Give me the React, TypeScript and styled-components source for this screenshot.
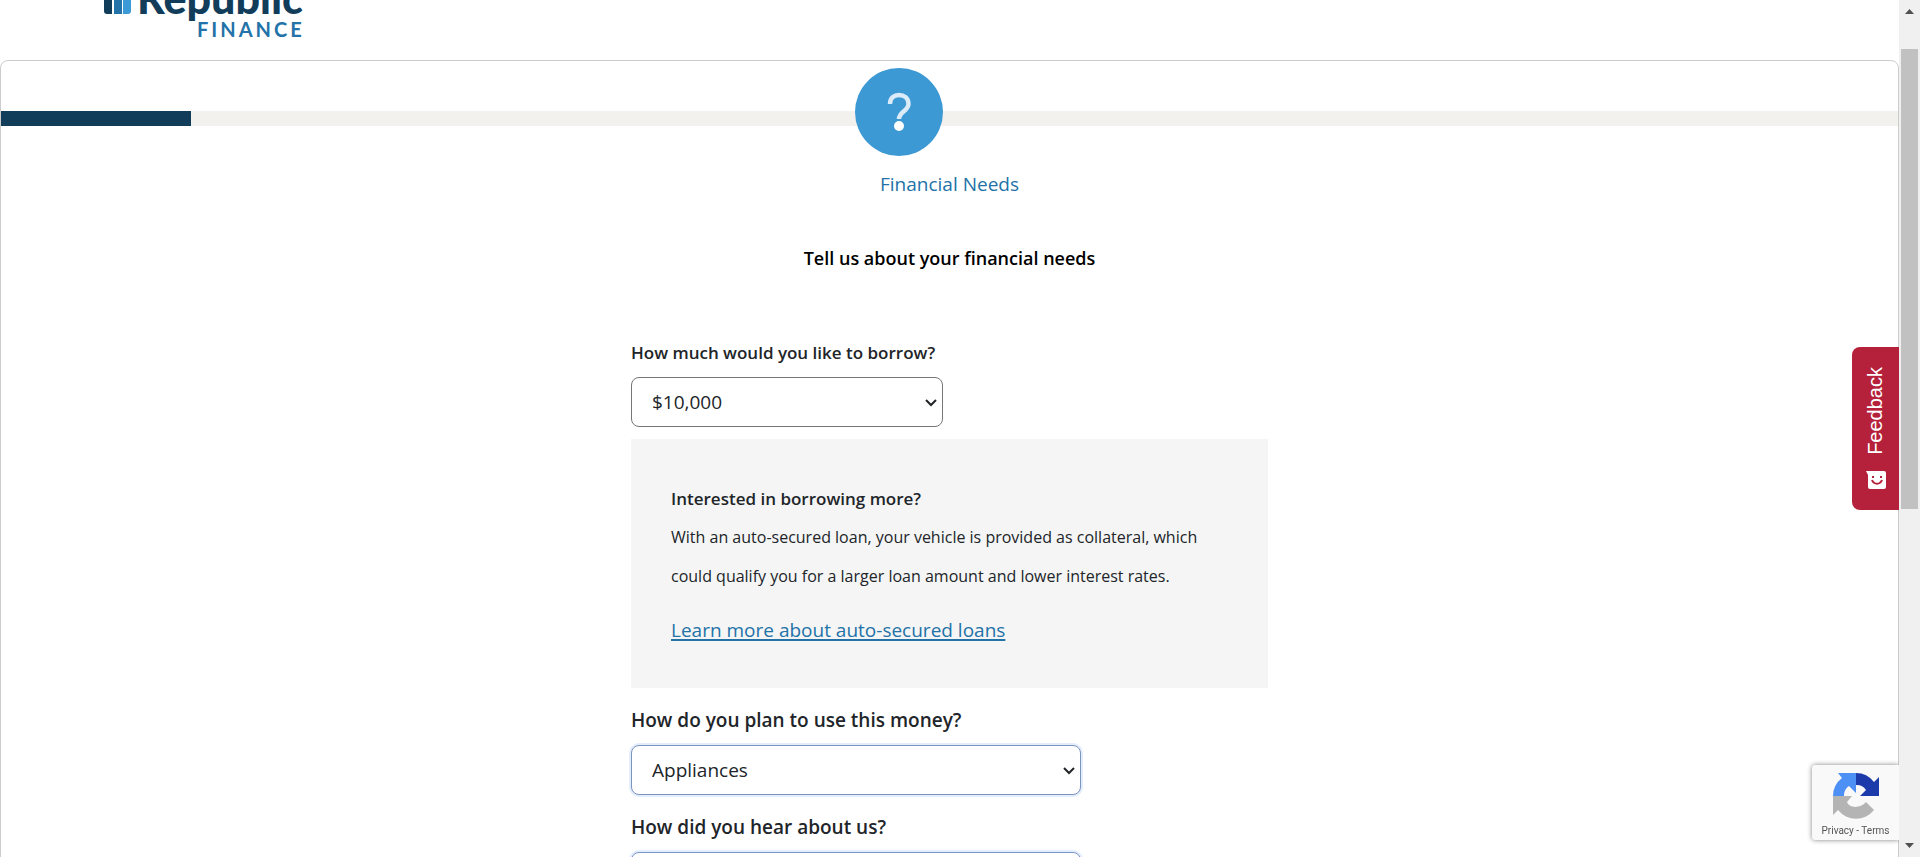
import React from "react";
import styled, { createGlobalStyle } from "styled-components";

const GlobalStyle = createGlobalStyle`
  *, *::before, *::after { box-sizing: border-box; }
  body {
    margin: 0;
    background: #fff;
    color: #212529;
    font-family: "Open Sans", "Noto Sans", sans-serif;
    font-size: 19px;
  }
`;

const Shell = styled.div`
  display: grid;
  grid-template-columns: minmax(0, 1fr) 21px;
  height: 100vh;
  overflow: hidden;
`;

const Viewport = styled.div`
  display: flex;
  flex-direction: column;
  min-height: 0;
  overflow: hidden;
`;

const Header = styled.header`
  flex: none;
  height: 60px;
  padding: 0 104px;
`;

const LogoLink = styled.a`
  display: block;
  width: 210px;
  svg { display: block; }
`;

const Card = styled.main`
  flex: none;
  padding-bottom: 80px;
  border: 1px solid #ccc;
  border-radius: 8px;
`;

const Stepper = styled.div`
  display: grid;
  padding-top: 7px;
`;

const Track = styled.div`
  grid-area: 1 / 1;
  height: 15px;
  margin-top: 43px;
  background: #f2f1ed;
`;

const Fill = styled.div<{ $percent: number }>`
  width: ${(p) => p.$percent}%;
  height: 100%;
  background: #113d5b;
`;

const Step = styled.div`
  grid-area: 1 / 1;
  justify-self: center;
  width: 10%;
  min-width: 160px;
  color: #2372a8;
  text-align: center;
`;

const StepBadge = styled.div`
  width: 88px;
  height: 88px;
  border-radius: 50%;
  background: #3c99d4;
`;

const StepName = styled.div`
  margin-top: 16px;
  line-height: 24px;
`;

const Title = styled.h1`
  margin: 48px 0 68px;
  color: #000;
  font-size: 18px;
  font-weight: 600;
  line-height: 28px;
  text-align: center;
`;

const Form = styled.form`
  display: flex;
  flex-direction: column;
  gap: 20px;
  width: 100%;
  max-width: 637px;
  margin: 0 auto;
`;

const Group = styled.div`
  display: flex;
  flex-direction: column;
  gap: 12px;
`;

const Label = styled.label<{ $small?: boolean }>`
  font-size: ${(p) => (p.$small ? 17 : 19)}px;
  font-weight: 600;
  line-height: 25px;
`;

const SelectBox = styled.div<{ $width: number }>`
  position: relative;
  width: ${(p) => p.$width}px;
  max-width: 100%;
`;

const Select = styled.select<{ $focus?: boolean }>`
  display: block;
  appearance: none;
  width: 100%;
  height: 50px;
  padding: 0 20px;
  border: 1px solid ${(p) => (p.$focus ? "#7a93bf" : "#767676")};
  border-radius: 8px;
  background: #fff;
  box-shadow: ${(p) => (p.$focus ? "0 0 0 2px #e3edfd" : "none")};
  color: #212529;
  font: inherit;
`;

const Chevron = styled.svg`
  position: absolute;
  top: 21px;
  right: 6px;
  pointer-events: none;
`;

const Notice = styled.section`
  padding: 40px;
  background: #f5f5f5;
`;

const NoticeTitle = styled.h2`
  margin: 0;
  font-size: 17px;
  font-weight: 600;
  line-height: 39px;
`;

const NoticeText = styled.p`
  margin: 0 0 16px;
  font-size: 16px;
  line-height: 39px;
`;

const NoticeLink = styled.a`
  display: inline-block;
  color: #2372a8;
  line-height: 36px;
  text-decoration-thickness: 2px;
  text-underline-offset: 2px;
`;

const Feedback = styled.button`
  position: fixed;
  top: 347px;
  right: 21px;
  display: flex;
  flex-direction: column;
  align-items: center;
  gap: 16px;
  padding: 20px 12px 21px;
  border: 0;
  border-radius: 8px 0 0 8px;
  background: #b5203a;
  color: #fff;
  font: 20px "Liberation Sans", Arial, sans-serif;
`;

const FeedbackText = styled.span`
  writing-mode: vertical-rl;
  transform: rotate(180deg);
`;

const Captcha = styled.aside`
  position: fixed;
  right: 21px;
  bottom: 17px;
  display: flex;
  flex-direction: column;
  align-items: center;
  gap: 5px;
  width: 87px;
  height: 75px;
  padding-top: 7px;
  border-radius: 3px 0 0 3px;
  background: #f9f9f9;
  box-shadow: 0 0 5px #808080;
  clip-path: inset(-8px 0 -8px -8px);
  color: #555;
  font: 10px Roboto, sans-serif;
  a { color: inherit; text-decoration: none; }
`;

const ScrollBar = styled.div`
  display: flex;
  flex-direction: column;
  align-items: center;
  background: #f0f0f0;
`;

const ScrollArrow = styled.svg`
  flex: none;
  margin: 9px 0;
`;

const ScrollLane = styled.div`
  flex: 1;
  width: 17px;
  padding-top: 26px;
`;

const ScrollThumb = styled.div`
  height: 460px;
  background: #c1c1c1;
`;

function Logo() {
  return (
    <svg width="210" height="40" viewBox="0 0 210 40" role="img" aria-label="Republic Finance">
      <path d="M0 0h8v14H3a3 3 0 0 1-3-3z" fill="#113d5b" />
      <path d="M10 0h8v14h-8z" fill="#2372a8" />
      <path d="M19 0h8v11a3 3 0 0 1-3 3h-5z" fill="#3c9ad6" />
      <text x="33" y="14" fill="#113d5b" fontFamily="Lato" fontWeight="900" fontSize="43">Republic</text>
      <text x="93" y="37" fill="#2372a8" fontFamily="Lato" fontWeight="700" fontSize="20" letterSpacing="3">FINANCE</text>
    </svg>
  );
}

function Dropdown({ id, width, options, focus }: { id: string; width: number; options: string[]; focus?: boolean }) {
  return (
    <SelectBox $width={width}>
      <Select id={id} $focus={focus}>
        {options.map((o) => <option key={o}>{o}</option>)}
      </Select>
      <Chevron width="12" height="9" viewBox="0 0 12 9" fill="none" stroke="#212529" strokeWidth="2">
        <path d="M1 2l5 5 5-5" />
      </Chevron>
    </SelectBox>
  );
}

export default function App() {
  return (
    <Shell>
      <GlobalStyle />
      <Viewport>
        <Header>
          <LogoLink href="#"><Logo /></LogoLink>
        </Header>
        <Card>
          <Stepper>
            <Track><Fill $percent={10} /></Track>
            <Step>
              <StepBadge>
                <svg width="88" height="88" viewBox="0 0 88 88" fill="none">
                  <path d="M35 36c0-6 4-9 9-9s9.500 3 9.500 9c0 7-9.500 7.500-9.500 15" stroke="#dcebf8" strokeWidth="4.500" />
                  <circle cx="44" cy="58" r="5" fill="#fff" />
                </svg>
              </StepBadge>
              <StepName>Financial Needs</StepName>
            </Step>
          </Stepper>
          <Title>Tell us about your financial needs</Title>
          <Form>
            <Group>
              <Label htmlFor="amount" $small>How much would you like to borrow?</Label>
              <Dropdown id="amount" width={312} options={["$10,000"]} />
              <Notice>
                <NoticeTitle>Interested in borrowing more?</NoticeTitle>
                <NoticeText>
                  With an auto-secured loan, your vehicle is provided as collateral, which could qualify you for a larger loan amount and lower interest rates.
                </NoticeText>
                <NoticeLink href="#">Learn more about auto-secured loans</NoticeLink>
              </Notice>
            </Group>
            <Group>
              <Label htmlFor="purpose">How do you plan to use this money?</Label>
              <Dropdown id="purpose" width={450} options={["Appliances"]} focus />
            </Group>
            <Group>
              <Label htmlFor="source">How did you hear about us?</Label>
              <Dropdown id="source" width={450} options={[""]} focus />
            </Group>
          </Form>
        </Card>
      </Viewport>
      <ScrollBar aria-hidden="true">
        <ScrollArrow width="9" height="5" viewBox="0 0 9 5"><path d="M0 5l4.500-5L9 5z" fill="#505050" /></ScrollArrow>
        <ScrollLane><ScrollThumb /></ScrollLane>
        <ScrollArrow width="9" height="5" viewBox="0 0 9 5"><path d="M0 0l4.500 5L9 0z" fill="#505050" /></ScrollArrow>
      </ScrollBar>
      <Feedback type="button">
        <FeedbackText>Feedback</FeedbackText>
        <svg width="20" height="18" viewBox="0 0 20 18">
          <path d="M0 0h18a2 2 0 0 1 2 2v14a2 2 0 0 1-2 2H4a2 2 0 0 1-2-2V4z" fill="#fff" />
          <path d="M6 9c2 5 8 5 10 0" fill="none" stroke="#b5203a" strokeWidth="2" />
          <path d="M6 5h2v2H6zM14 5h2v2h-2z" fill="#b5203a" />
        </svg>
      </Feedback>
      <Captcha>
        <svg width="48" height="48" viewBox="0 0 48 48">
          <path d="M24 1a23 23 0 0 1 18 9l5-5v19H28l6-6a11 11 0 0 0-10-5z" fill="#1c3aa9" />
          <path d="M24 1H6l4 5A23 23 0 0 0 1 24h11c0-5 2-8 5-10l7 7z" fill="#4c8ff5" />
          <path d="M1 24v19l5-5a23 23 0 0 0 36 0l-8-8c-6 7-17 6-19 0l5-6z" fill="#b4b4b4" />
        </svg>
        <div><a href="#">Privacy</a> - <a href="#">Terms</a></div>
      </Captcha>
    </Shell>
  );
}
